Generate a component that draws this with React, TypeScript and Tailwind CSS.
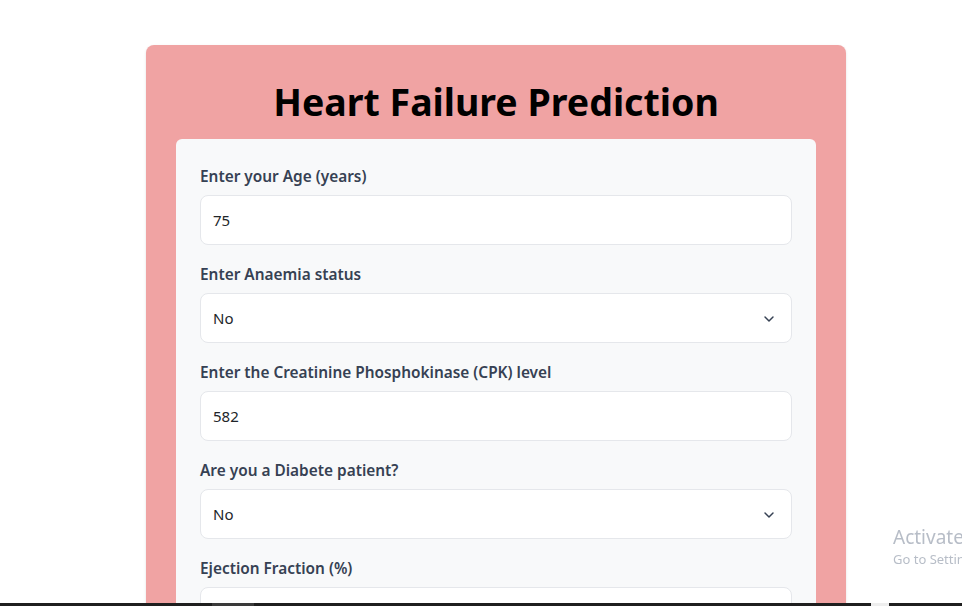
import { ChevronDown } from "lucide-react";

const fields = [
  { label: "Enter your Age (years)", type: "input", value: "75" },
  { label: "Enter Anaemia status", type: "select", value: "No" },
  { label: "Enter the Creatinine Phosphokinase (CPK) level", type: "input", value: "582" },
  { label: "Are you a Diabete patient?", type: "select", value: "No" },
  { label: "Ejection Fraction (%)", type: "input", value: "" },
];

export default function App() {
  return (
    <div
      className="h-screen bg-white pt-[45px] overflow-hidden relative"
      style={{ fontFamily: '"Noto Sans", "Open Sans", sans-serif' }}
    >
      <div className="ml-[146px] w-[700px] rounded-lg bg-[#f0a3a3] px-[30px] pt-[37px] pb-10 shadow-sm">
        <h1 className="text-center text-[37.5px] leading-[40px] font-bold text-black mb-[17px]">
          Heart Failure Prediction
        </h1>
        <div className="rounded-md bg-[#f8f9fa] px-6 pt-[28px] pb-6">
          {fields.map((f) => (
            <div key={f.label} className="mb-[20px]">
              <label className="block text-[15.4px] leading-[20px] font-semibold text-gray-700 mb-[8px]">
                {f.label}
              </label>
              <div className="relative h-[50px] rounded-lg border border-gray-200 bg-white flex items-center px-3 pt-[1px] text-[15px] text-[#212529]">
                {f.value}
                {f.type === "select" && (
                  <ChevronDown className="absolute right-[14px] w-4 h-4 text-gray-700" strokeWidth={2.2} />
                )}
              </div>
            </div>
          ))}
        </div>
      </div>
      <div className="fixed right-0 top-[524px] w-[69px] overflow-hidden whitespace-nowrap text-gray-400/70">
        <div className="text-[19px] leading-[26px]">Activate Windows</div>
        <div className="text-[13px] leading-[18px]">Go to Settings to activate Windows.</div>
      </div>
      <div className="fixed bottom-0 left-0 right-0 h-[3px] flex">
        <div className="w-[212px] bg-[#1f1f1f]" />
        <div className="w-[42px] bg-[#3a3a3a]" />
        <div className="w-[617px] bg-[#1f1f1f]" />
        <div className="w-[18px] bg-[#eeeeee]" />
        <div className="flex-1 bg-[#1f1f1f]" />
      </div>
    </div>
  );
}
